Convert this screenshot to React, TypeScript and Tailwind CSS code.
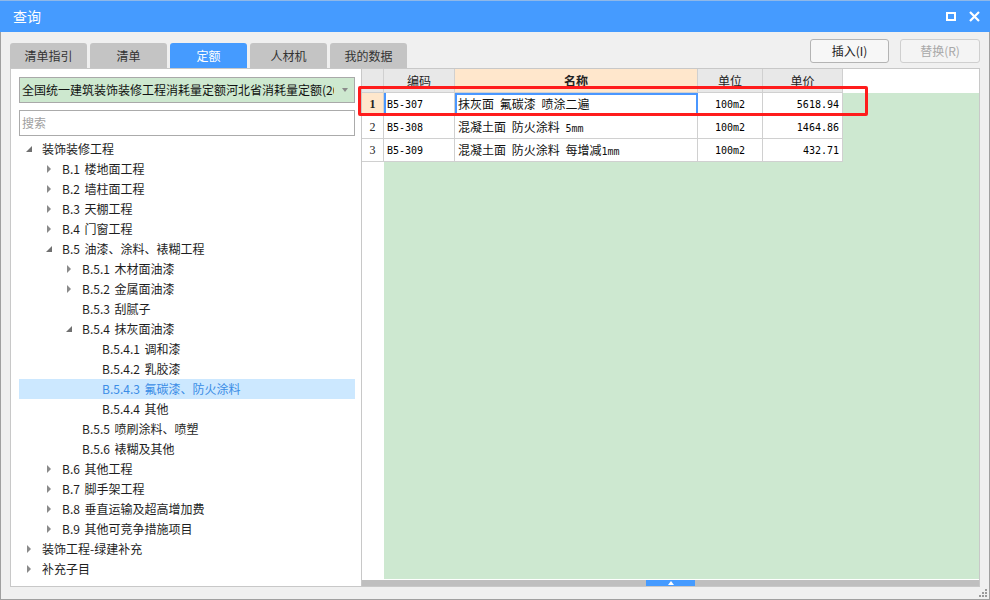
import React from "react";

const cjk = "font-['Noto_Sans_CJK_SC','Noto_Sans',sans-serif]";
const mono = "font-['DejaVu_Sans_Mono','Noto_Sans_CJK_SC',monospace]";

type Node = { level: number; text: string; arrow?: "open" | "closed"; selected?: boolean };

const tree: Node[] = [
  { level: 0, text: "装饰装修工程", arrow: "open" },
  { level: 1, text: "B.1 楼地面工程", arrow: "closed" },
  { level: 1, text: "B.2 墙柱面工程", arrow: "closed" },
  { level: 1, text: "B.3 天棚工程", arrow: "closed" },
  { level: 1, text: "B.4 门窗工程", arrow: "closed" },
  { level: 1, text: "B.5 油漆、涂料、裱糊工程", arrow: "open" },
  { level: 2, text: "B.5.1 木材面油漆", arrow: "closed" },
  { level: 2, text: "B.5.2 金属面油漆", arrow: "closed" },
  { level: 2, text: "B.5.3 刮腻子" },
  { level: 2, text: "B.5.4 抹灰面油漆", arrow: "open" },
  { level: 3, text: "B.5.4.1 调和漆" },
  { level: 3, text: "B.5.4.2 乳胶漆" },
  { level: 3, text: "B.5.4.3 氟碳漆、防火涂料", selected: true },
  { level: 3, text: "B.5.4.4 其他" },
  { level: 2, text: "B.5.5 喷刷涂料、喷塑" },
  { level: 2, text: "B.5.6 裱糊及其他" },
  { level: 1, text: "B.6 其他工程", arrow: "closed" },
  { level: 1, text: "B.7 脚手架工程", arrow: "closed" },
  { level: 1, text: "B.8 垂直运输及超高增加费", arrow: "closed" },
  { level: 1, text: "B.9 其他可竞争措施项目", arrow: "closed" },
  { level: 0, text: "装饰工程-绿建补充", arrow: "closed" },
  { level: 0, text: "补充子目", arrow: "closed" },
];

const indent = ["pl-0", "pl-[20px]", "pl-[40px]", "pl-[60px]"];

const tabs = ["清单指引", "清单", "定额", "人材机", "我的数据"];

function Arrow({ kind }: { kind?: "open" | "closed" }) {
  if (kind === "closed")
    return (
      <span className="w-[23px] pl-[8px] flex items-center">
        <svg width="5" height="8" viewBox="0 0 5 8">
          <polygon points="0,0 4,4 0,8" fill="#8a8a8a" />
        </svg>
      </span>
    );
  if (kind === "open")
    return (
      <span className="w-[23px] pl-[7px] flex items-center">
        <svg width="7" height="7" viewBox="0 0 7 7">
          <polygon points="6,0 6,6 0,6" fill="#707070" />
        </svg>
      </span>
    );
  return <span className="w-[23px]" />;
}

function TreeRow({ node }: { node: Node }) {
  return (
    <div
      className={`flex items-center h-[20px] ${indent[node.level]} ${
        node.selected ? "bg-[#cce8ff] text-[#3b8de6]" : "text-[#1e1e1e]"
      }`}
    >
      <Arrow kind={node.arrow} />
      <span className="text-[12px] leading-[20px] whitespace-nowrap [word-spacing:2px]">{node.text}</span>
    </div>
  );
}

export default function App() {
  return (
    <div className={`w-[990px] h-[600px] flex flex-col bg-[#f0f0f0] ${cjk} overflow-hidden`}>
      {/* title bar */}
      <div className="h-[32px] bg-[#459bff] border-t border-[#8fb8e8] flex items-center justify-between pl-[13px] pr-[10px] text-white">
        <span className="text-[14px]">查询</span>
        <div className="flex items-center gap-[13px]">
          <svg width="10" height="9" viewBox="0 0 10 9">
            <rect x="1" y="1" width="8" height="7" fill="none" stroke="#fff" strokeWidth="2" />
          </svg>
          <svg width="11" height="11" viewBox="0 0 11 11">
            <path d="M1 1 L10 10 M10 1 L1 10" stroke="#fff" strokeWidth="2.2" />
          </svg>
        </div>
      </div>

      <div className="flex-1 flex flex-col border-x border-b border-[#a0a0a0]">
        {/* tabs + buttons */}
        <div className="h-[36px] flex justify-between pl-[9px] pr-[9px]">
          <div className="flex items-end gap-[3px]">
            {tabs.map((t) => (
              <div
                key={t}
                className={`w-[77px] h-[25px] rounded-t-[3px] flex items-center justify-center text-[12px] ${
                  t === "定额" ? "bg-[#459bff] text-white" : "bg-[#c4c4c4] text-[#333]"
                }`}
              >
                {t}
              </div>
            ))}
          </div>
          <div className="flex items-start gap-[11px] pt-[7px]">
            <button className="w-[79px] h-[24px] rounded-[3px] border border-[#b4b4b4] bg-[#f7f7f7] text-[12px] text-[#222]">
              插入(I)
            </button>
            <button className="w-[80px] h-[24px] rounded-[3px] border border-[#cfcfcf] bg-[#f4f4f4] text-[12px] text-[#a8a8a8]">
              替换(R)
            </button>
          </div>
        </div>

        {/* main */}
        <div className="h-[519px] flex pl-[9px]">
          {/* left panel */}
          <div className="w-[351px] bg-white border-l border-y border-[#c8c8c8] pl-[8px] pr-[6px] pt-[8px] flex flex-col">
            <div className="h-[26px] bg-[#cde8cf] border border-[#a9a9a9] flex items-center pl-[2px] pr-[4px]">
              <span className="flex-1 min-w-0 overflow-hidden whitespace-nowrap text-[12px] text-[#111]">
                全国统一建筑装饰装修工程消耗量定额河北省消耗量定额(2016)
              </span>
              <svg width="10" height="6" viewBox="0 0 10 6" className="ml-[6px]">
                <polygon points="2,1 8,1 5,5" fill="#8a8a8a" />
              </svg>
            </div>
            <div className="h-[26px] mt-[7px] border border-[#ababab] flex items-center pl-[2px] text-[12px] text-[#a0a0a0]">
              搜索
            </div>
            <div className="mt-[3px] flex flex-col">
              {tree.map((n) => (
                <TreeRow key={n.text} node={n} />
              ))}
            </div>
          </div>

          {/* grid */}
          <div className="w-[619px] bg-white border border-[#c8c8c8] flex flex-col relative">
            <div className="h-[24px] flex text-[12px] text-[#222]">
              <div className="w-[22px] bg-[#e8e8e8] border-r border-b border-[#d0d0d0]" />
              <div className="w-[71px] bg-[#e8e8e8] border-r border-b border-[#d0d0d0] flex items-center justify-center">编码</div>
              <div className="w-[243px] bg-[#ffe7cc] border-r border-b border-[#d0d0d0] flex items-center justify-center font-bold">名称</div>
              <div className="w-[65px] bg-[#e8e8e8] border-r border-b border-[#d0d0d0] flex items-center justify-center">单位</div>
              <div className="w-[80px] bg-[#e8e8e8] border-r border-b border-[#d0d0d0] flex items-center justify-center">单价</div>
            </div>
            <div className="flex-1 flex">
              <div className="w-[22px] flex flex-col font-['Liberation_Serif',serif] text-[12px] text-[#222]">
                <div className="h-[23px] bg-[#ffe7cc] border-r border-b border-[#d0d0d0] flex items-center justify-center font-bold">1</div>
                <div className="h-[23px] border-r border-b border-[#d0d0d0] flex items-center justify-center">2</div>
                <div className="h-[23px] border-r border-b border-[#d0d0d0] flex items-center justify-center">3</div>
              </div>
              <div className="flex-1 bg-[#cde8d0] flex flex-col">
                <div className="w-[459px] h-[23px] bg-white flex border-b border-[#d0d0d0]">
                  <div className={`w-[71px] border-l-2 border-l-[#4a97ff] border-r border-[#d0d0d0] flex items-center pl-[1px] text-[10px] ${mono}`}>B5-307</div>
                  <div className="w-[243px] border-2 border-[#4a97ff] flex items-center pl-[1px] text-[12px] text-[#111] [word-spacing:3px]">
                    <span>抹灰面 氟碳漆 喷涂二遍</span>
                  </div>
                  <div className={`w-[65px] border-r border-[#d0d0d0] flex items-center justify-center text-[10px] ${mono}`}>100m2</div>
                  <div className={`w-[80px] border-r border-[#d0d0d0] flex items-center justify-end pr-[3px] text-[10px] ${mono}`}>5618.94</div>
                </div>
                <div className="w-[459px] h-[23px] bg-white flex border-b border-[#d0d0d0]">
                  <div className={`w-[71px] border-r border-[#d0d0d0] flex items-center pl-[3px] text-[10px] ${mono}`}>B5-308</div>
                  <div className="w-[243px] border-r border-[#d0d0d0] flex items-center pl-[3px] text-[12px] text-[#111] [word-spacing:3px]">
                    <span>
                      混凝土面 防火涂料 <span className={`text-[10px] [word-spacing:0] ${mono}`}>5mm</span>
                    </span>
                  </div>
                  <div className={`w-[65px] border-r border-[#d0d0d0] flex items-center justify-center text-[10px] ${mono}`}>100m2</div>
                  <div className={`w-[80px] border-r border-[#d0d0d0] flex items-center justify-end pr-[3px] text-[10px] ${mono}`}>1464.86</div>
                </div>
                <div className="w-[459px] h-[23px] bg-white flex border-b border-[#d0d0d0]">
                  <div className={`w-[71px] border-r border-[#d0d0d0] flex items-center pl-[3px] text-[10px] ${mono}`}>B5-309</div>
                  <div className="w-[243px] border-r border-[#d0d0d0] flex items-center pl-[3px] text-[12px] text-[#111] [word-spacing:3px]">
                    <span>
                      混凝土面 防火涂料 每增减<span className={`text-[10px] ${mono}`}>1mm</span>
                    </span>
                  </div>
                  <div className={`w-[65px] border-r border-[#d0d0d0] flex items-center justify-center text-[10px] ${mono}`}>100m2</div>
                  <div className={`w-[80px] border-r border-[#d0d0d0] flex items-center justify-end pr-[3px] text-[10px] ${mono}`}>432.71</div>
                </div>
              </div>
            </div>
            <div className="h-[1px] bg-white" />
            <div className="h-[6px] bg-[#bfbfbf] flex">
              <div className="w-[284px]" />
              <div className="w-[49px] bg-[#459bff] flex items-center justify-center">
                <svg width="6" height="4" viewBox="0 0 6 4">
                  <polygon points="3,0 6,4 0,4" fill="#fff" />
                </svg>
              </div>
            </div>
            {/* red highlight over row 1 */}
            <div className="absolute left-[-4px] top-[17px] w-[510px] h-[30px] border-[3px] border-[#ff1c1c] rounded-[2px] pointer-events-none" />
          </div>
        </div>

        {/* bottom strip with grip */}
        <div className="flex-1 flex justify-end items-end pr-[1px] pb-[1px]">
          <svg width="10" height="10" viewBox="0 0 10 10">
            <rect x="7" y="1" width="2" height="2" fill="#9a9a9a" />
            <rect x="4" y="4" width="2" height="2" fill="#9a9a9a" />
            <rect x="7" y="4" width="2" height="2" fill="#9a9a9a" />
            <rect x="1" y="7" width="2" height="2" fill="#9a9a9a" />
            <rect x="4" y="7" width="2" height="2" fill="#9a9a9a" />
            <rect x="7" y="7" width="2" height="2" fill="#9a9a9a" />
          </svg>
        </div>
      </div>
    </div>
  );
}
